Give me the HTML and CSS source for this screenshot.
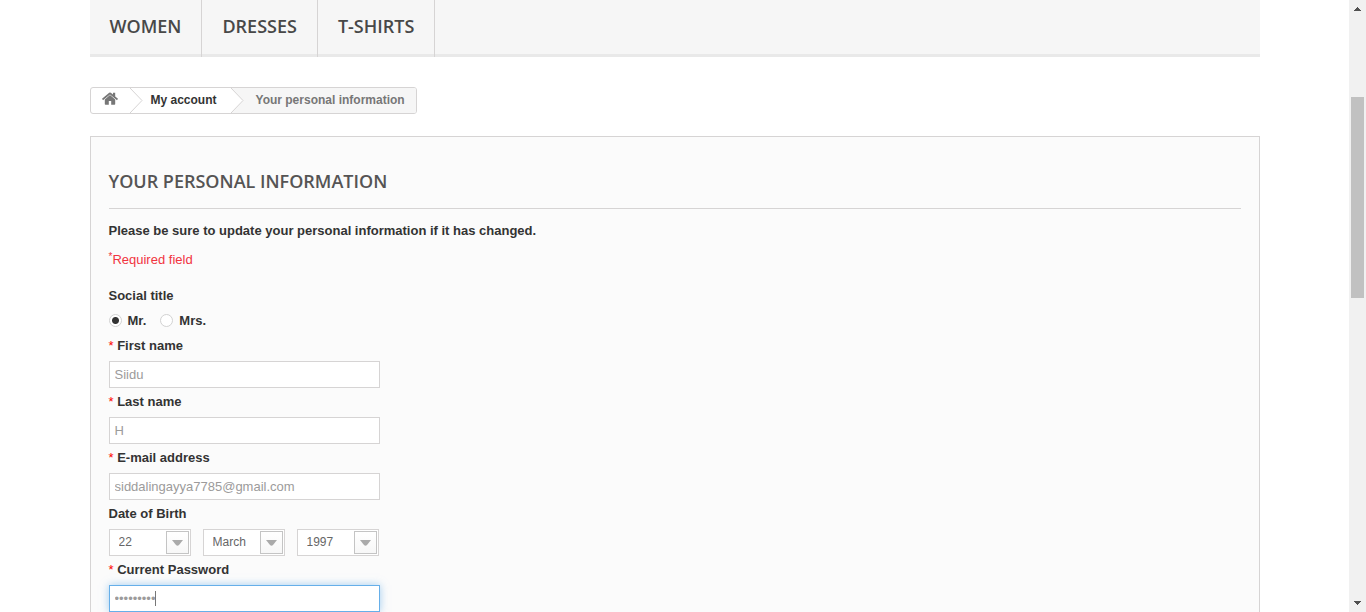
FILE: index.html
```html
<!DOCTYPE html>
<html lang="en">
<head>
<meta charset="utf-8">
<title>Your personal information</title>
<link rel="stylesheet" href="styles.css">
</head>
<body>
<div class="page">
  <div class="container">
    <nav class="menu">
      <a class="menu-link" href="#">WOMEN</a>
      <a class="menu-link" href="#">DRESSES</a>
      <a class="menu-link" href="#">T-SHIRTS</a>
    </nav>

    <nav class="breadcrumb" aria-label="Breadcrumb">
      <a class="crumb crumb-home" href="#" aria-label="Home">
        <svg width="16" height="14" viewBox="0 0 16 14" fill="#777"><path d="M8 3.1 13.2 7.5V12.1Q13.2 12.8 12.5 12.8H9.2V9H6.8V12.8H3.5Q2.8 12.8 2.8 12.1V7.5Z"/><path d="M0 6.800 7.200.700Q8 .2 8.800.700L11 2.600V.8H13.2V4.500L16 6.800 15 8.200 8 2.400 1 8.200Z"/></svg>
      </a>
      <svg class="chevron" width="13" height="25" viewBox="0 0 13 25"><path fill="#fff" d="M0 0 12 12.500 0 25Z"/><path fill="none" stroke="#d6d4d4" d="M0 0 12 12.500 0 25"/></svg>
      <a class="crumb crumb-account" href="#">My account</a>
      <svg class="chevron chevron-last" width="13" height="25" viewBox="0 0 13 25"><path fill="#fff" d="M0 0 12 12.500 0 25Z"/><path fill="none" stroke="#d6d4d4" d="M0 0 12 12.500 0 25"/></svg>
      <span class="crumb crumb-current">Your personal information</span>
    </nav>

    <main class="box">
      <h1 class="title">YOUR PERSONAL INFORMATION</h1>
      <p class="intro">Please be sure to update your personal information if it has changed.</p>
      <p class="required"><sup class="sup">*</sup>Required field</p>
      <form class="form">
        <div class="label" id="social">Social title</div>
        <div class="radios" role="radiogroup" aria-labelledby="social">
          <label class="radio-label"><input class="radio" type="radio" name="gender" checked>Mr.</label>
          <label class="radio-label"><input class="radio" type="radio" name="gender">Mrs.</label>
        </div>
        <label class="label" for="first"><sup class="star">*</sup> First name</label>
        <input class="field" id="first" type="text" value="Siidu">
        <label class="label" for="last"><sup class="star">*</sup> Last name</label>
        <input class="field" id="last" type="text" value="H">
        <label class="label" for="email"><sup class="star">*</sup> E-mail address</label>
        <input class="field" id="email" type="email" value="siddalingayya7785@gmail.com">
        <label class="label" for="day">Date of Birth</label>
        <div class="dates">
          <div class="picker"><select class="select" id="day"><option>22</option></select><span class="arrow"><svg width="11" height="6"><path fill="#aaa" d="M0 0H11L7 5Q5.500 6.500 4 5Z"/></svg></span></div>
          <div class="picker"><select class="select" aria-label="Month"><option>March</option></select><span class="arrow"><svg width="11" height="6"><path fill="#aaa" d="M0 0H11L7 5Q5.500 6.500 4 5Z"/></svg></span></div>
          <div class="picker"><select class="select" aria-label="Year"><option>1997</option></select><span class="arrow"><svg width="11" height="6"><path fill="#aaa" d="M0 0H11L7 5Q5.500 6.500 4 5Z"/></svg></span></div>
        </div>
        <label class="label" for="password"><sup class="star">*</sup> Current Password</label>
        <div class="password">
          <input class="field field-active" id="password" type="password" value="password1">
          <span class="caret"></span>
        </div>
      </form>
    </main>
  </div>
</div>
<div class="scrollbar" aria-hidden="true">
  <svg width="7" height="4" shape-rendering="crispEdges" fill="#505050"><path d="M3 0H4V1H5V2H6V3H7V4H0V3H1V2H2V1H3Z"/></svg>
  <div class="track"><div class="thumb"></div></div>
  <svg width="7" height="4" shape-rendering="crispEdges" fill="#505050"><path d="M0 0H7V1H6V2H5V3H4V4H3V3H2V2H1V1H0Z"/></svg>
</div>
</body>
</html>
```
FILE: styles.css
```css
* { box-sizing: border-box; }

body {
  display: flex;
  height: 100vh;
  margin: 0;
  overflow: hidden;
  background: #fff;
  color: #333;
  font: 13px/18px "Liberation Sans", Arial, sans-serif;
}

.page { flex: 1; overflow: hidden; }
.container { max-width: 1170px; margin: 0 auto; }

.menu {
  display: flex;
  background: linear-gradient(to top, #e9e9e9 3px, #f6f6f6 3px);
}
.menu-link {
  padding: 15px 20px 20px;
  border-right: 1px solid #d6d4d4;
  color: #484848;
  font: 600 18px/22px "Open Sans", sans-serif;
  text-decoration: none;
}

.breadcrumb {
  display: inline-flex;
  height: 27px;
  margin: 30px 0 22px;
  border: 1px solid #d6d4d4;
  border-radius: 3px;
  overflow: hidden;
  vertical-align: top;
  font-size: 12px;
  font-weight: bold;
  line-height: 24px;
}
.crumb { color: #333; text-decoration: none; }
.crumb-home { padding: 4px 12px 0 11px; line-height: 0; }
.crumb-account { padding: 0 14px 0 8px; }
.crumb-current { padding: 0 11px 0 12px; background: #f6f6f6; color: #777; }
.chevron-last { background: #f6f6f6; }

.box {
  padding: 33px 18px 30px;
  border: 1px solid #d6d4d4;
  background: #fbfbfb;
}
.title {
  margin: 0 0 13px;
  padding-bottom: 16px;
  border-bottom: 1px solid #d6d4d4;
  color: #555454;
  font: 600 18px/22px "Open Sans", sans-serif;
}
.intro { margin: 0 0 11px; font-weight: bold; }
.required { margin: 0 0 18px; color: #f13340; }

.sup, .star { position: relative; line-height: 0; vertical-align: baseline; }
.sup { top: -4px; font-size: 10px; }
.star { color: #f00; font-size: 13px; font-weight: normal; }

.form { width: 271px; }
.label { display: block; margin-bottom: 6px; font-weight: bold; }
.radios { display: flex; gap: 14px; margin-bottom: 7px; line-height: 19px; }
.radio-label { display: flex; align-items: center; gap: 6px; font-weight: bold; }
.radio {
  appearance: none;
  width: 13px;
  height: 13px;
  margin: 0;
  border: 1px solid #d2d2d2;
  border-radius: 50%;
  background: #fff;
}
.radio:checked { background: radial-gradient(circle, #333 3px, #fff 4px); }

.field {
  display: block;
  width: 100%;
  height: 27px;
  margin: 0 0 5px;
  padding: 3px 5px;
  border: 1px solid #d6d4d4;
  outline: none;
  background: #fff;
  color: #9c9b9b;
  font: 13px/18px "Liberation Sans", Arial, sans-serif;
}
.password { position: relative; }
.field-active {
  border-color: #66afe9;
  box-shadow: 0 0 8px rgba(102, 175, 233, 0.6);
}
.caret {
  position: absolute;
  top: 6px;
  left: 46px;
  width: 1px;
  height: 15px;
  background: #777;
}

.dates { display: flex; gap: 12px; margin-bottom: 5px; }
.picker { position: relative; width: 82px; }
.select {
  display: block;
  appearance: none;
  width: 100%;
  height: 27px;
  padding: 0 24px 2px 9px;
  border: 1px solid #d6d4d4;
  border-radius: 0;
  background: #fff;
  color: #666;
  font: 12px/18px "Liberation Sans", Arial, sans-serif;
}
.arrow {
  position: absolute;
  top: 2px;
  right: 2px;
  display: flex;
  align-items: center;
  justify-content: center;
  width: 23px;
  height: 23px;
  border: 1px solid #c4c4c4;
  background: linear-gradient(#fff, #f7f7f7);
  pointer-events: none;
}

.scrollbar {
  display: flex;
  flex-direction: column;
  align-items: center;
  width: 17px;
  padding: 7px 0;
  background: #f1f1f1;
}
.track { flex: 1; width: 13px; padding-top: 86px; }
.thumb { height: 201px; background: #c1c1c1; }
```
